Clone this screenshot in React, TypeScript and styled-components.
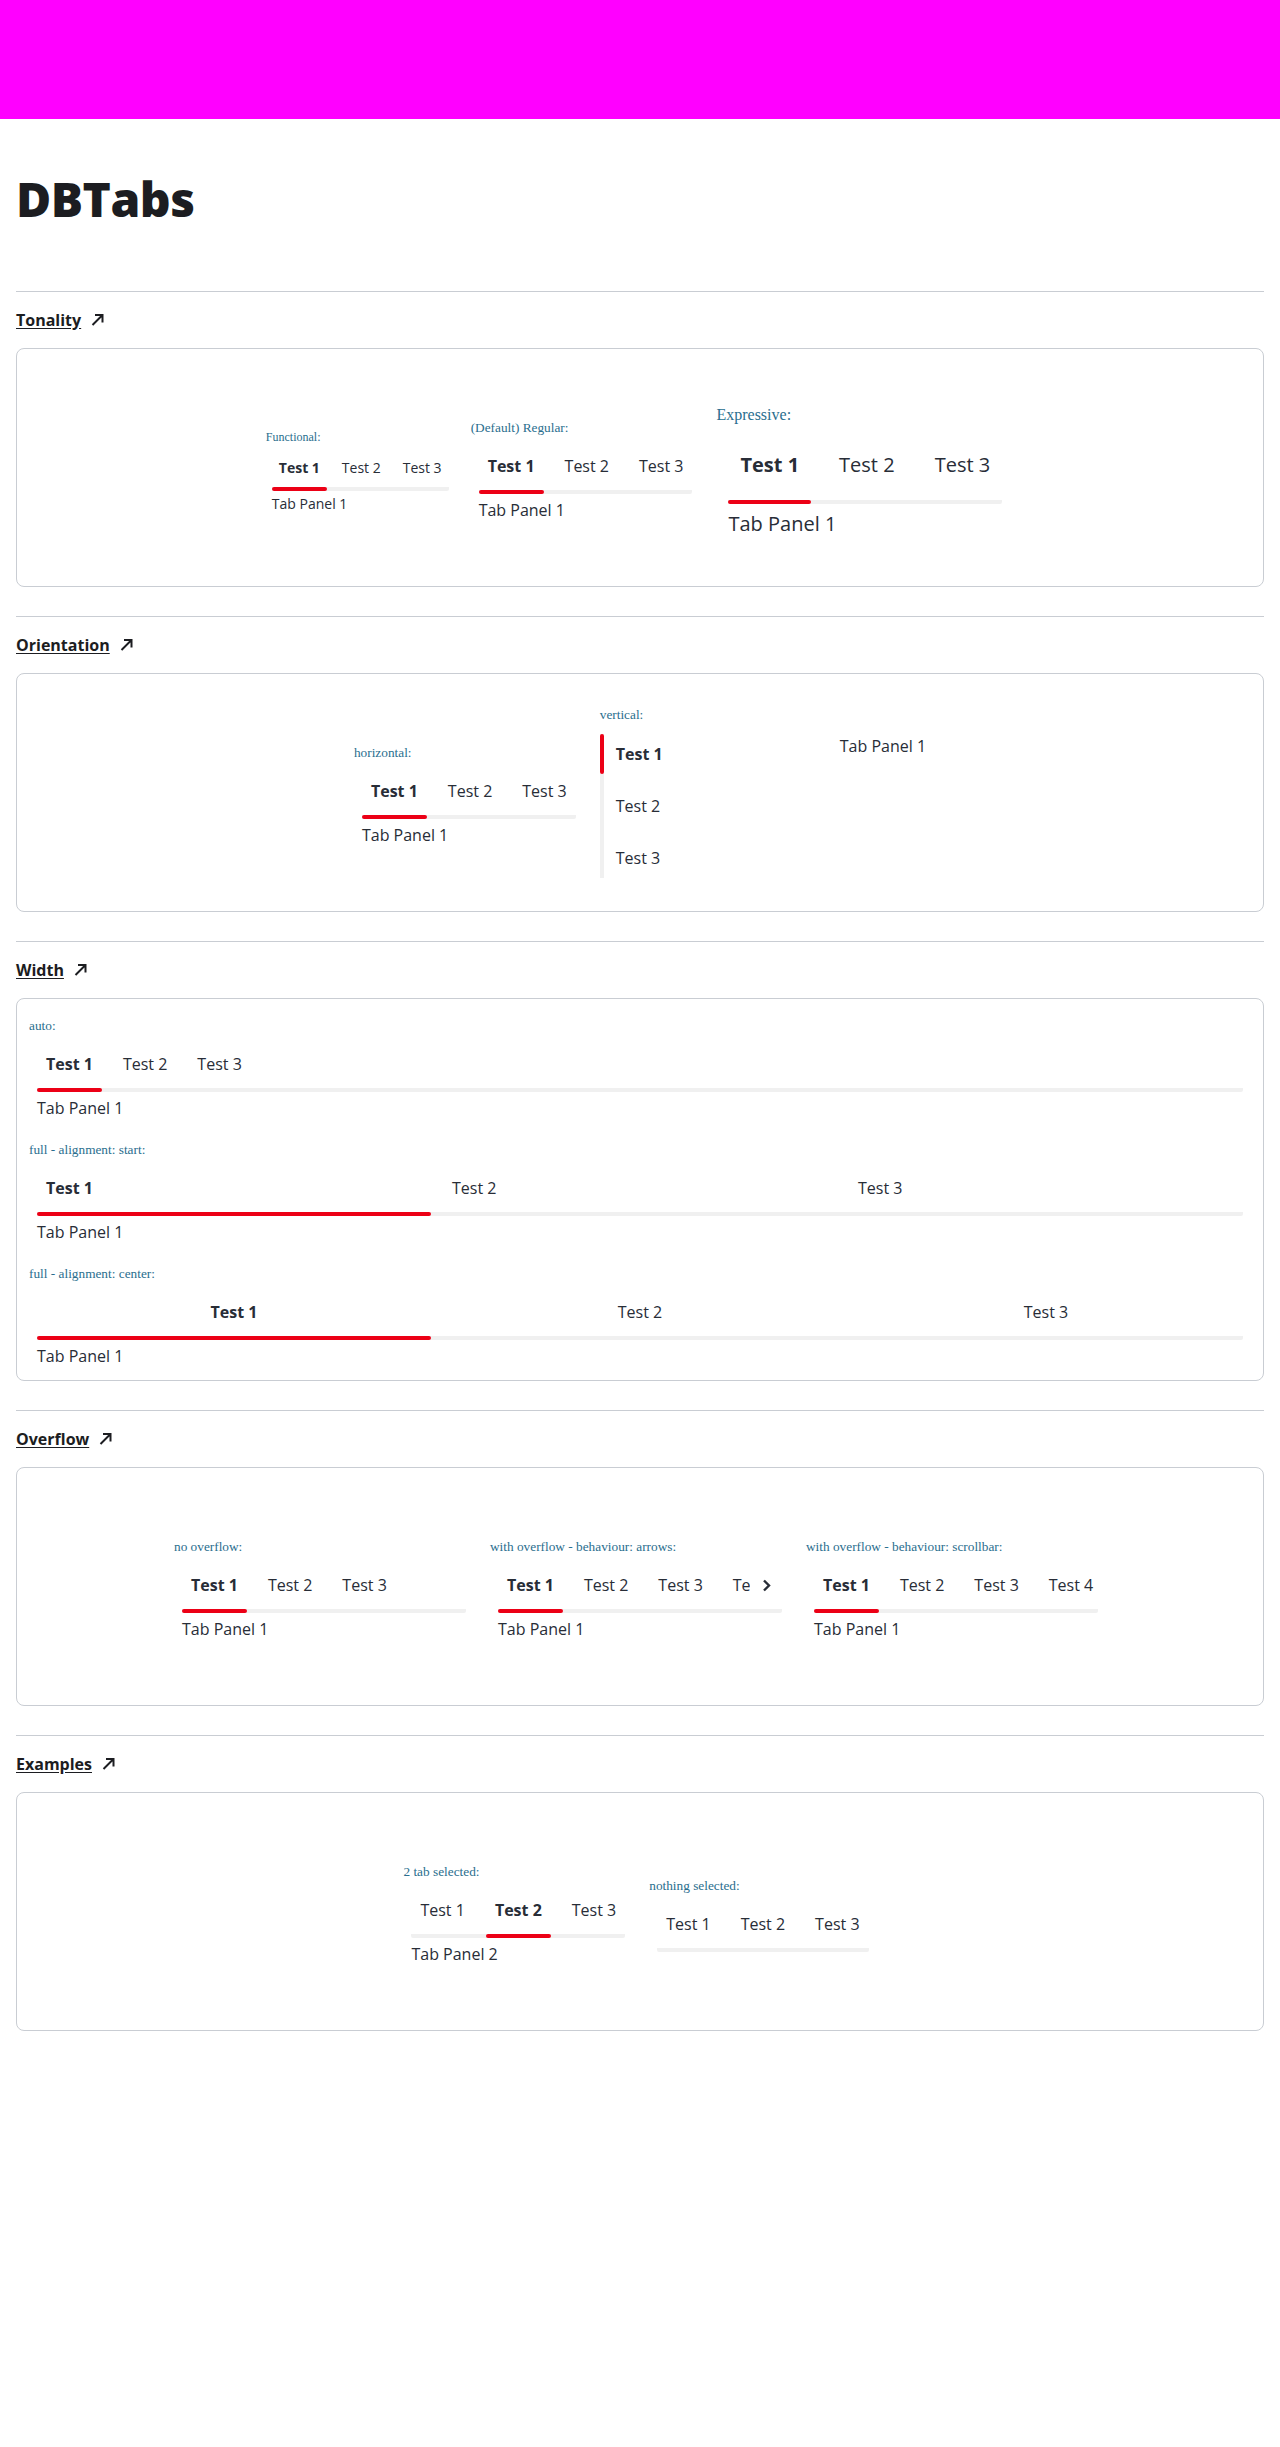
import React from "react";
import styled, { createGlobalStyle } from "styled-components";

type Tonality = "functional" | "regular" | "expressive";

const SIZES = {
	functional: { fs: 14, lh: 20, h: 32, padX: 7, gap: 8, inset: 6, railGap: 3, panelGap: 3, labelFs: 12, labelLh: 20 },
	regular: { fs: 16, lh: 24, h: 40, padX: 9, gap: 12, inset: 8, railGap: 4, panelGap: 4, labelFs: 13.3, labelLh: 20 },
	expressive: { fs: 20, lh: 28, h: 52, padX: 12, gap: 16, inset: 12, railGap: 9, panelGap: 6, labelFs: 16, labelLh: 24 }
};

const RED = "#ec0016";
const RAIL = "#f0f0f0";
const TEXT = "#282d37";
const LINE = "#c9cdd3";

type TabsProps = {
	tonality?: Tonality;
	items: string[];
	selected?: number;
	width?: "auto" | "full";
	align?: "start" | "center";
	overflow?: "none" | "arrows" | "scrollbar";
	stretch?: boolean;
	panel?: string;
};

const Tabs = ({
	tonality = "regular",
	items,
	selected = 0,
	width = "auto",
	align = "start",
	overflow = "none",
	stretch = false,
	panel
}: TabsProps) => {
	return (
		<TabsRoot $t={tonality} $stretch={stretch || width === "full" || overflow !== "none"}>
			<TabBar $t={tonality}>
				<TabScroller $t={tonality} $overflow={overflow}>
					{items.map((item, i) => (
						<Tab key={item} $t={tonality} $full={width === "full"}>
							<TabText $t={tonality} $active={i === selected} $align={align}>
								{item}
							</TabText>
							<Indicator $t={tonality} $active={i === selected} />
						</Tab>
					))}
				</TabScroller>
				{overflow === "arrows" && (
					<ArrowButton $t={tonality} aria-label="scroll right">
						<svg width="9" height="13" viewBox="0 0 9 13" fill="none">
							<path d="M2 1.5 7 6.5 2 11.5" stroke={TEXT} strokeWidth="2.4" />
						</svg>
					</ArrowButton>
				)}
			</TabBar>
			{panel && <Panel $t={tonality}>{panel}</Panel>}
		</TabsRoot>
	);
};

const VerticalTabs = ({ items, panel }: { items: string[]; panel: string }) => (
	<VerticalRoot>
		<VTabList>
			{items.map((item, i) => (
				<VTab key={item}>
					<VIndicator $active={i === 0} />
					<VTabText $active={i === 0}>{item}</VTabText>
				</VTab>
			))}
		</VTabList>
		<VPanel>{panel}</VPanel>
	</VerticalRoot>
);

const ArrowIcon = () => (
	<svg width="15" height="15" viewBox="0 0 15 15" fill="none">
		<path d="M2.5 13 12.5 3M5 3h7.5v7.5" stroke="#1c1d21" strokeWidth="2" />
	</svg>
);

const Section = ({ title, children }: { title: string; children: React.ReactNode }) => (
	<SectionBox>
		<SectionHeading>
			<HeadingLink>{title}</HeadingLink>
			<ArrowIcon />
		</SectionHeading>
		{children}
	</SectionBox>
);

const T3 = ["Test 1", "Test 2", "Test 3"];
const T5 = ["Test 1", "Test 2", "Test 3", "Test 4", "Test 5"];

const App = () => {
	return (
		<>
			<GlobalStyle />
			<TopBar />
			<Main>
				<Title>DBTabs</Title>

				<Section title="Tonality">
					<Card>
						<Example>
							<Label $t="functional" $gap={5}>Functional:</Label>
							<Tabs tonality="functional" items={T3} panel="Tab Panel 1" />
						</Example>
						<Example>
							<Label $t="regular" $gap={8}>(Default) Regular:</Label>
							<Tabs tonality="regular" items={T3} panel="Tab Panel 1" />
						</Example>
						<Example>
							<Label $t="expressive" $gap={12}>Expressive:</Label>
							<Tabs tonality="expressive" items={T3} panel="Tab Panel 1" />
						</Example>
					</Card>
				</Section>

				<Section title="Orientation">
					<Card>
						<Example>
							<Label>horizontal:</Label>
							<Tabs items={T3} panel="Tab Panel 1" />
						</Example>
						<Example>
							<Label $gap={9}>vertical:</Label>
							<VerticalTabs items={T3} panel="Tab Panel 1" />
						</Example>
					</Card>
				</Section>

				<Section title="Width">
					<WidthCard>
						<Example $block>
							<Label>auto:</Label>
							<Tabs items={T3} panel="Tab Panel 1" stretch />
						</Example>
						<Example $block>
							<Label>full - alignment: start:</Label>
							<Tabs items={T3} panel="Tab Panel 1" width="full" align="start" />
						</Example>
						<Example $block>
							<Label>full - alignment: center:</Label>
							<Tabs items={T3} panel="Tab Panel 1" width="full" align="center" />
						</Example>
					</WidthCard>
				</Section>

				<Section title="Overflow">
					<Card>
						<Example $width={300}>
							<Label>no overflow:</Label>
							<Tabs items={T3} panel="Tab Panel 1" overflow="scrollbar" />
						</Example>
						<Example $width={300}>
							<Label>with overflow - behaviour: arrows:</Label>
							<Tabs items={T5} panel="Tab Panel 1" overflow="arrows" />
						</Example>
						<Example $width={300}>
							<Label>with overflow - behaviour: scrollbar:</Label>
							<Tabs items={T5} panel="Tab Panel 1" overflow="scrollbar" />
						</Example>
					</Card>
				</Section>

				<Section title="Examples">
					<Card>
						<Example>
							<Label>2 tab selected:</Label>
							<Tabs items={T3} selected={1} panel="Tab Panel 2" />
						</Example>
						<Example>
							<Label>nothing selected:</Label>
							<Tabs items={T3} selected={-1} />
						</Example>
					</Card>
				</Section>
			</Main>
		</>
	);
};
export default App;

// =============================================================================
// Styled Components
// =============================================================================
const GlobalStyle = createGlobalStyle`
	body {
		margin: 0;
		background: #fff;
		color: ${TEXT};
		font-family: "Open Sans", "Noto Sans", sans-serif;
	}
`;

const TopBar = styled.header`
	height: 119px;
	background: #ff00ff;
`;

const Main = styled.main`
	padding: 0 16px 120px;
`;

const Title = styled.h1`
	margin: 51px 0 63px;
	font-size: 48px;
	line-height: 57.6px;
	font-weight: 800;
	color: #1c1d21;
	letter-spacing: -0.5px;
`;

const SectionBox = styled.section`
	border-top: 1px solid ${LINE};
	padding-top: 16px;
	margin-bottom: 29px;
`;

const SectionHeading = styled.h2`
	display: flex;
	align-items: center;
	gap: 9px;
	margin: 0 0 16px;
	font-size: 16px;
	line-height: 24px;
	font-weight: 700;
	color: #1c1d21;
`;

const HeadingLink = styled.span`
	text-decoration: underline;
	text-underline-offset: 2px;
`;

const Card = styled.div`
	box-sizing: border-box;
	min-height: 239px;
	border: 1px solid ${LINE};
	border-radius: 8px;
	padding: 15px 12px 9px;
	display: flex;
	justify-content: center;
	align-items: center;
	gap: 16px;
`;

const WidthCard = styled(Card)`
	flex-direction: column;
	align-items: stretch;
	justify-content: flex-start;
	gap: 20px;
	padding: 17px 12px 12px;
`;

const Example = styled.div<{ $width?: number; $block?: boolean }>`
	display: flex;
	flex-direction: column;
	align-items: ${(p) => (p.$block || p.$width ? "stretch" : "flex-start")};
	width: ${(p) => (p.$width ? `${p.$width}px` : "auto")};
`;

const Label = styled.div<{ $t?: Tonality; $gap?: number }>`
	font-family: "Liberation Serif", "DejaVu Serif", serif;
	font-size: ${(p) => SIZES[p.$t ?? "regular"].labelFs}px;
	line-height: ${(p) => SIZES[p.$t ?? "regular"].labelLh}px;
	color: #2a6e8e;
	margin-bottom: ${(p) => p.$gap ?? 8}px;
`;

const TabsRoot = styled.div<{ $t: Tonality; $stretch: boolean }>`
	display: flex;
	flex-direction: column;
	align-self: ${(p) => (p.$stretch ? "stretch" : "flex-start")};
	font-size: ${(p) => SIZES[p.$t].fs}px;
	line-height: ${(p) => SIZES[p.$t].lh}px;
`;

const TabBar = styled.div<{ $t: Tonality }>`
	display: flex;
	align-items: flex-start;
	margin: 0 ${(p) => SIZES[p.$t].inset}px;
	background: linear-gradient(${RAIL}, ${RAIL}) left bottom / 100% 4px no-repeat;
	border-radius: 2px;
`;

const TabScroller = styled.div<{ $t: Tonality; $overflow: string }>`
	display: flex;
	flex: 1 1 auto;
	min-width: 0;
	gap: ${(p) => SIZES[p.$t].gap}px;
	overflow-x: ${(p) => (p.$overflow === "none" ? "visible" : "hidden")};
`;

const Tab = styled.button<{ $t: Tonality; $full: boolean }>`
	display: flex;
	flex-direction: column;
	flex: ${(p) => (p.$full ? "1 1 0" : "0 0 auto")};
	padding: 0;
	border: 0;
	background: none;
	font: inherit;
	color: ${TEXT};
	cursor: pointer;
`;

const TabText = styled.span<{ $t: Tonality; $active: boolean; $align: string }>`
	display: block;
	height: ${(p) => SIZES[p.$t].h}px;
	line-height: ${(p) => SIZES[p.$t].h}px;
	padding: 0 ${(p) => SIZES[p.$t].padX}px;
	white-space: nowrap;
	text-align: ${(p) => (p.$align === "center" ? "center" : "left")};
	font-weight: ${(p) => (p.$active ? 700 : 400)};
`;

const Indicator = styled.span<{ $t: Tonality; $active: boolean }>`
	display: block;
	height: 4px;
	margin-top: ${(p) => SIZES[p.$t].railGap}px;
	border-radius: 2px;
	background: ${(p) => (p.$active ? RED : "transparent")};
`;

const ArrowButton = styled.button<{ $t: Tonality }>`
	flex: 0 0 32px;
	height: ${(p) => SIZES[p.$t].h}px;
	display: flex;
	align-items: center;
	justify-content: center;
	padding: 0;
	border: 0;
	background: #fff;
	cursor: pointer;
`;

const Panel = styled.div<{ $t: Tonality }>`
	margin: ${(p) => SIZES[p.$t].panelGap}px ${(p) => SIZES[p.$t].inset}px 0;
`;

const VerticalRoot = styled.div`
	display: flex;
	align-items: flex-start;
	margin-bottom: 8px;
	font-size: 16px;
	line-height: 24px;
`;

const VTabList = styled.div`
	width: 240px;
	display: flex;
	flex-direction: column;
	gap: 12px;
	background: linear-gradient(${RAIL}, ${RAIL}) left top / 4px 100% no-repeat;
`;

const VTab = styled.div`
	display: flex;
	height: 40px;
	cursor: pointer;
`;

const VIndicator = styled.span<{ $active: boolean }>`
	width: 4px;
	border-radius: 2px;
	background: ${(p) => (p.$active ? RED : "transparent")};
`;

const VTabText = styled.span<{ $active: boolean }>`
	padding-left: 12px;
	line-height: 40px;
	font-weight: ${(p) => (p.$active ? 700 : 400)};
`;

const VPanel = styled.div`
	white-space: nowrap;
`;
